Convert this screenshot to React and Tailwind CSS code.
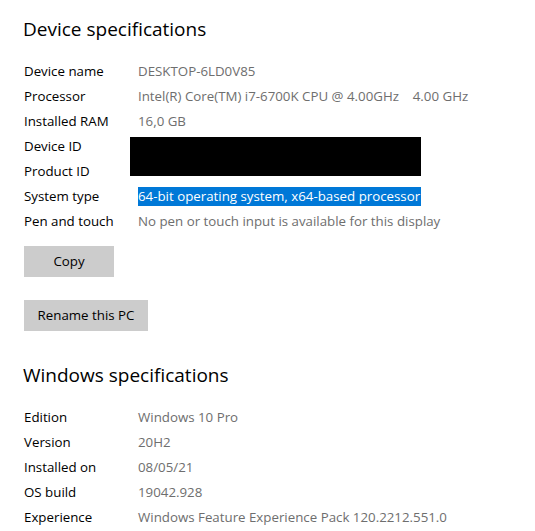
const deviceSpecs = [
  { label: 'Device name', value: 'DESKTOP-6LD0V85' },
  { label: 'Processor', value: 'Intel(R) Core(TM) i7-6700K CPU @ 4.00GHz    4.00 GHz' },
  { label: 'Installed RAM', value: '16,0 GB' },
  { label: 'Device ID', value: '' },
  { label: 'Product ID', value: '' },
  { label: 'System type', value: '64-bit operating system, x64-based processor', selected: true },
  { label: 'Pen and touch', value: 'No pen or touch input is available for this display' },
];

const windowsSpecs = [
  { label: 'Edition', value: 'Windows 10 Pro' },
  { label: 'Version', value: '20H2' },
  { label: 'Installed on', value: '08/05/21' },
  { label: 'OS build', value: '19042.928' },
  { label: 'Experience', value: 'Windows Feature Experience Pack 120.2212.551.0' },
];

const SpecRow = ({ label, value, selected }) => (
  <div className="flex items-center h-[25px] text-[13.3px]">
    <div className="w-[114px] shrink-0 text-[#000]">{label}</div>
    {selected ? (
      <span className="inline-block w-[283px] h-[19px] leading-[19px] bg-[#0078d7] text-white whitespace-pre">{value}</span>
    ) : (
      <div className="text-[#6e6e6e] whitespace-pre">{value}</div>
    )}
  </div>
);

const App = () => {
  return (
    <div
      className="w-[535px] h-[531px] overflow-hidden bg-white pl-[24px] pt-[14px]"
      style={{ fontFamily: '"Segoe UI", "Open Sans", "Noto Sans", sans-serif' }}
    >
      <h2 className="text-[19px] leading-[30px] ml-[-1px] text-[#000]">Device specifications</h2>

      <div className="relative mt-[15px]">
        {deviceSpecs.map((row) => (
          <SpecRow key={row.label} {...row} />
        ))}
        {/* redacted ids */}
        <div className="absolute left-[106px] top-[78px] w-[291px] h-[39px] bg-black" />
      </div>

      <button className="block mt-[12px] w-[90px] h-[31px] bg-[#cccccc] text-[13.3px] text-[#000]">Copy</button>
      <button className="block mt-[23px] w-[124px] h-[31px] bg-[#cccccc] text-[13.3px] text-[#000]">Rename this PC</button>

      <h2 className="mt-[29px] text-[19px] leading-[30px] ml-[-1px] text-[#000]">Windows specifications</h2>

      <div className="mt-[15px]">
        {windowsSpecs.map((row) => (
          <SpecRow key={row.label} {...row} />
        ))}
      </div>
    </div>
  );
};

export default App;
